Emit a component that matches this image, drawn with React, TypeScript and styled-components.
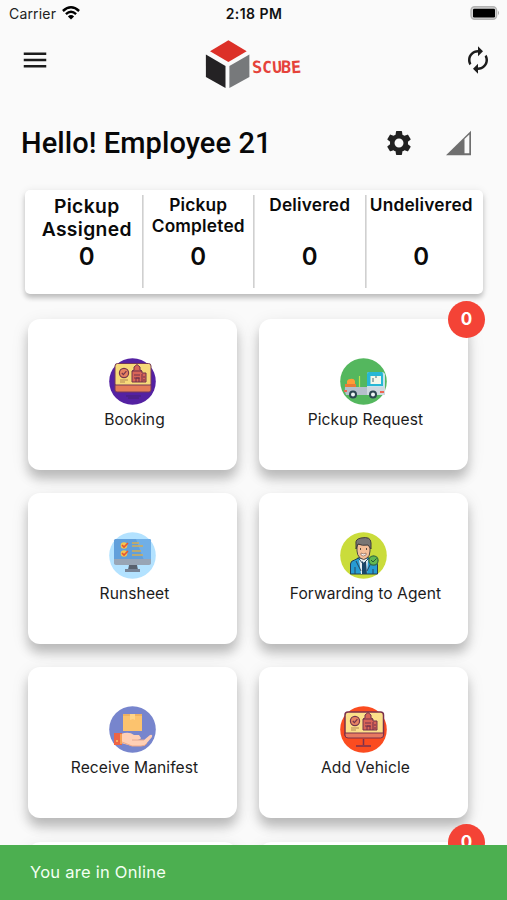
import React from 'react';
import styled, { createGlobalStyle } from 'styled-components';
import { MdMenu, MdAutorenew, MdSettings } from 'react-icons/md';

const GlobalStyle = createGlobalStyle`
  * { box-sizing: border-box; }
  body { margin: 0; background: #fafafa; color: #111; font-family: Inter, "Liberation Sans", sans-serif; }
`;

const Screen = styled.div`
  width: 507px;
  height: 900px;
  overflow: hidden;
  display: flex;
  flex-direction: column;
  background: #fafafa;
`;

const StatusBar = styled.div`
  height: 28px;
  flex: none;
  padding: 0 7px 2px 9px;
  display: grid;
  grid-template-columns: 1fr auto 1fr;
  align-items: center;
  font-size: 14px;
`;

const Carrier = styled.div`
  display: flex;
  align-items: center;
  gap: 6px;
  letter-spacing: 0.18px;
  color: #222;
`;

const Clock = styled.div`
  margin-right: 1px;
  font-weight: 600;
  font-size: 14px;
  letter-spacing: 0.45px;
  color: #111;
`;

const BatterySlot = styled.div`
  display: flex;
  justify-content: flex-end;
`;

const AppBar = styled.header`
  height: 72px;
  flex: none;
  padding: 0 14px 8px 20px;
  display: flex;
  justify-content: space-between;
  align-items: center;
  color: #1c1c1c;
`;

const Brand = styled.div`
  display: flex;
  align-items: center;
  padding: 9px 7px 0 0;
`;

const BrandName = styled.span`
  display: flex;
  font-family: "DejaVu Sans Mono", monospace;
  font-weight: 700;
  font-size: 17px;
  line-height: 20px;
  letter-spacing: -0.3px;
  margin: 4px 0 0 2px;
  color: #e5423a;
`;

const BrandLetter = styled.span<{ $tilt: number; $scale: number }>`
  transform: rotate(${p => p.$tilt}deg) scale(${p => p.$scale});
`;

const Greeting = styled.div`
  height: 90px;
  flex: none;
  padding: 0 35px 5px 21px;
  display: flex;
  align-items: center;
`;

const Title = styled.h1`
  margin: 0 auto 0 0;
  font-family: Roboto, sans-serif;
  font-size: 29px;
  font-weight: 500;
  letter-spacing: 0.08px;
  color: #080808;
  white-space: nowrap;
`;

const Actions = styled.div`
  display: flex;
  align-items: center;
  gap: 31px;
  color: #212121;
`;

const Stats = styled.section`
  flex: none;
  width: 458px;
  height: 104px;
  margin-left: 25px;
  padding: 5px 6px 6px;
  display: grid;
  grid-template-columns: repeat(4, 111.5px);
  background: #fff;
  border-radius: 5px;
  box-shadow: 0 4px 5px rgba(0, 0, 0, 0.2), 0 1px 8px rgba(0, 0, 0, 0.09);
`;

const Stat = styled.div<{ $large?: boolean }>`
  display: flex;
  flex-direction: column;
  align-items: center;
  text-align: center;
  white-space: pre-line;
  font-weight: 600;
  font-size: ${p => (p.$large ? 19.3 : 17.3)}px;
  line-height: ${p => (p.$large ? 23 : 20.6)}px;
  letter-spacing: ${p => (p.$large ? 0.35 : 0.2)}px;
  color: #0a0a0a;
  & + & { box-shadow: -1px 0 0 #d0d0d0, inset 1px 0 0 #e2e2e2; }
`;

const StatLabel = styled.div`
  height: 47px;
`;

const StatValue = styled.div`
  font-size: 24px;
  line-height: 29px;
  letter-spacing: 0;
`;

const Tiles = styled.main`
  flex: 1;
  min-height: 0;
  overflow: hidden;
  padding: 24.6px 0 0 28px;
  display: grid;
  grid-template-columns: 209px 209px;
  grid-auto-rows: 151px;
  gap: 23.4px 22px;
`;

const Tile = styled.div`
  position: relative;
  display: flex;
  flex-direction: column;
  align-items: center;
  padding-top: 39px;
  background: #fff;
  border-radius: 12px;
  box-shadow: 0 9px 11px rgba(0, 0, 0, 0.2), 0 5px 18px rgba(0, 0, 0, 0.1);
`;

const TileIcon = styled.svg`
  width: 47px;
  height: 47px;
  margin-right: 1px;
`;

const TileLabel = styled.div`
  margin-top: 5px;
  padding-left: 4px;
  font-size: 15.6px;
  line-height: 20px;
  letter-spacing: 0.08px;
  color: #1c1c1c;
  white-space: nowrap;
`;

const Badge = styled.div`
  position: absolute;
  right: -17px;
  top: -17.5px;
  width: 37px;
  height: 37px;
  border-radius: 50%;
  background: #f44336;
  color: #fff;
  font-size: 17px;
  font-weight: 700;
  line-height: 37px;
  text-align: center;
`;

const Snackbar = styled.footer`
  flex: none;
  height: 55px;
  padding-left: 30px;
  background: #4caf50;
  color: #f3fff3;
  font-size: 16.5px;
  line-height: 54px;
  letter-spacing: 0.25px;
  position: relative;
`;

const Wifi = () => (
  <svg width="18" height="14" viewBox="0 0 18 14" fill="none" stroke="#000" strokeWidth="2.4">
    <path d="M.9 5Q9-2.4 17.1 5M3.9 8.2Q9 3.5 14.1 8.2" />
    <path d="M9 13.6 5.9 10.4Q9 7.8 12.1 10.4Z" fill="#000" stroke="none" />
  </svg>
);

const Battery = () => (
  <svg width="30" height="14" viewBox="0 0 30 14">
    <rect x="1" y=".8" width="25.6" height="12.4" rx="3.6" fill="#d5d5d5" stroke="#b3b3b3" strokeWidth="1.4" />
    <rect x="3" y="2.7" width="22" height="8.8" rx="1.3" />
    <path d="M28 4.8q2 2.2 0 4.4z" fill="#aaa" />
  </svg>
);

const Cube = () => (
  <svg width="45" height="49" viewBox="0 0 45 49">
    <path d="M23.4.3 41.7 11.3 23.4 22 5 11.3Z" fill="#dc3028" />
    <path d="M.9 14.5 20.5 26v22L.9 37Z" fill="#242224" />
    <path d="M44.4 14.5 24.4 26v22L44.4 37Z" fill="#77797b" />
  </svg>
);

const Signal = () => (
  <svg width="27" height="26" viewBox="0 0 27 26">
    <path d="M1 25.3 26 .7v24.6Z" fill="#6f6f6f" />
    <path d="M19.5 9 24.3 4.5v18.8h-4.8Z" fill="#fafafa" />
  </svg>
);

const Verification = () => (
  <>
    <circle cx="15" cy="15" r="4.6" fill="#e78262" stroke="#74354c" strokeWidth="1.2" />
    <path d="m12.8 15 1.6 1.7 3-3.5" stroke="#74354c" strokeWidth="1.2" fill="none" />
    <path d="M11 22h8M11 24h5" stroke="#b38554" strokeWidth="1" />
    <path d="M23 24V13l2-1V9l3-2.5L31 9v3l2 1v2h4v9Z" fill="#d86558" stroke="#71324b" strokeWidth="1" />
    <path d="M23 13h10M25 17h6m-6 3h6M33 16v8m1-5h2m-2 3h2M27 24v-4h3v4" stroke="#71324b" strokeWidth="1" fill="none" />
  </>
);

const BookingArt = () => (
  <>
    <circle cx="23.5" cy="23.5" r="23.3" fill="#5421a2" />
    <rect x="6" y="5.5" width="36" height="23" rx="2.5" fill="#f7da79" stroke="#743858" />
    <Verification />
    <path d="M6 27h36v5q0 2-2 2H8q-2 0-2-2Z" fill="#e47c58" stroke="#743858" />
    <path d="M17 38h15M19 40h11" stroke="#442074" />
  </>
);

const TruckArt = () => (
  <>
    <circle cx="23.5" cy="23.5" r="23.3" fill="#54b75e" />
    <path d="M5 29h22v8H6q-2-4-1-8Z" fill="#b5bfcb" />
    <path d="M7 28v-5q1-2 3-2 4-1 5 2v5Z" fill="#ff9d35" />
    <path d="M5 26h11v3H5Z" fill="#e97c36" />
    <path d="M19.5 18v11" stroke="#b6e74e" strokeWidth="1.2" />
    <path d="M27 16q0-2 2-2h13q2 0 3 2v21H27Z" fill="#c7e3eb" />
    <path d="M27 28V16q0-2 2-2h13q1 0 1 3v11Z" fill="#27b7d5" />
    <path d="M30.5 18H41v8H30.5Z" fill="#f3f7ea" />
    <path d="M33 24v-4m2-1h2" stroke="#496d74" />
    <path d="M27 29h18v8H27Z" fill="#cfd8df" />
    <path d="M4 33h3m33 1h4" stroke="#ef6654" strokeWidth="2" />
    <circle cx="13" cy="36.5" r="3" fill="#edf4f5" stroke="#2b4650" strokeWidth="2" />
    <circle cx="33" cy="36.5" r="3" fill="#edf4f5" stroke="#2b4650" strokeWidth="2" />
  </>
);

const RunsheetArt = () => (
  <>
    <circle cx="23.5" cy="23.5" r="23.3" fill="#b3e2ff" />
    <rect x="5" y="7" width="37" height="25" rx="1.5" fill="#619fdb" />
    <path d="M27 7h13q2 0 2 2v22H36Z" fill="#70afe7" />
    <path d="M5 27h37v4q0 2-2 2H7q-2 0-2-2Z" fill="#98a5b5" />
    <path d="M20 33h8l1 5H19Z" fill="#58616e" />
    <path d="M16 37h15v3H16Z" fill="#778497" />
    <circle cx="15" cy="13.5" r="3.3" fill="#f4c64e" />
    <circle cx="15" cy="21.5" r="3.3" fill="#f4c64e" />
    <path d="m13 13 2 2 4-4m-6 10 2 2 4-4" stroke="#e65534" strokeWidth="1.6" fill="none" />
    <path d="M23 11h7m-7 3h11m-11 5h9m-9 4h11" stroke="#d4ad55" strokeWidth="1.4" />
  </>
);

const AgentArt = () => (
  <>
    <circle cx="23.5" cy="23.5" r="23.3" fill="#cadc3b" />
    <path d="M10.5 42V32q0-3 4-4l6-3h6l7 3q4 1 4 5v9Z" fill="#279bd2" stroke="#263f54" />
    <path d="M19 27h9l-1 15h-6Z" fill="#e8f0f3" />
    <path d="m22 29 2 2 2-2 1 13h-5Z" fill="#1a4668" />
    <path d="M18 25.5 23 32l6-6m-13 3 5 10m11-10-5 10M15 35v7m18-5v5" stroke="#25465f" fill="none" />
    <path d="M17 12h13v7q0 5-3 7-3 3-7 0-3-3-3-7Z" fill="#f4be98" stroke="#4b4643" />
    <path d="M16 17v-5q-1-5 5-6 10-2 10 5v6l-3-4q-6 1-10-1Z" fill="#777574" stroke="#403c3b" />
    <path d="M20 17h1m5 0h1" stroke="#272727" strokeWidth="1.4" />
    <path d="M21 21q3 2 5 0v2q-3 2-5 0Z" fill="#fff" stroke="#735346" strokeWidth=".6" />
    <circle cx="33.5" cy="28.5" r="4.6" fill="#62b851" stroke="#356b41" strokeWidth="1.2" />
    <path d="m31 28 2 2 3.5-3.5" stroke="#245c36" fill="none" />
  </>
);

const ManifestArt = () => (
  <>
    <circle cx="23.5" cy="23.5" r="23.3" fill="#7785cd" />
    <path d="M14 8h19v17H14Z" fill="#fcc36e" />
    <path d="M14 8h19v2H14Z" fill="#efb261" />
    <path d="M21 8h5v6l-2-1-3 1Z" fill="#ffd487" />
    <path d="M12 28q8-3 13 1h5l2 3q-1 2-5 2h8l6-5q3-1 2 2l-6 7q-2 2-7 2H23l-11-3Z" fill="#ffcfb5" />
    <path d="M23 34h12" stroke="#e6a88e" />
    <path d="m13 36 10 4h9q5 0 6-3" stroke="#f0a986" fill="none" />
    <path d="M5 27h8v12H5Z" fill="#ee6445" />
    <path d="M11 28h2v10h-2Z" fill="#f7a052" />
    <circle cx="8" cy="35" r="1" fill="#ffc36c" />
  </>
);

const VehicleArt = () => (
  <>
    <circle cx="23.5" cy="23.5" r="23.3" fill="#fb4c20" />
    <rect x="5" y="6" width="38.5" height="25" rx="3" fill="#fce08a" stroke="#7b304b" strokeWidth="1.5" />
    <Verification />
    <path d="M5 27h38.5v2q0 3-3 3H8q-3 0-3-3Z" fill="#e77a61" stroke="#7b304b" />
    <path d="M23.5 33v6M16 40h15" stroke="#79304d" strokeWidth="1.5" />
  </>
);

const brandLetters = [
  { char: 'S', tilt: -4, scale: 0.98 },
  { char: 'C', tilt: 2, scale: 0.94 },
  { char: 'U', tilt: -4, scale: 0.94 },
  { char: 'B', tilt: 2, scale: 1 },
  { char: 'E', tilt: -4, scale: 0.98 },
];

const stats = [
  { label: 'Pickup\nAssigned', large: true },
  { label: 'Pickup\nCompleted' },
  { label: 'Delivered' },
  { label: 'Undelivered' },
];

const tiles = [
  { label: 'Booking', Art: BookingArt },
  { label: 'Pickup Request', Art: TruckArt, badge: 0 },
  { label: 'Runsheet', Art: RunsheetArt },
  { label: 'Forwarding to Agent', Art: AgentArt },
  { label: 'Receive Manifest', Art: ManifestArt },
  { label: 'Add Vehicle', Art: VehicleArt },
];

export default function App() {
  return (
    <Screen>
      <GlobalStyle />
      <StatusBar>
        <Carrier>Carrier<Wifi /></Carrier>
        <Clock>2:18 PM</Clock>
        <BatterySlot><Battery /></BatterySlot>
      </StatusBar>
      <AppBar>
        <MdMenu size={30} />
        <Brand>
          <Cube />
          <BrandName>
            {brandLetters.map(l => (
              <BrandLetter key={l.char} $tilt={l.tilt} $scale={l.scale}>{l.char}</BrandLetter>
            ))}
          </BrandName>
        </Brand>
        <MdAutorenew size={30} />
      </AppBar>
      <Greeting>
        <Title>Hello! Employee 21</Title>
        <Actions><MdSettings size={30} /><Signal /></Actions>
      </Greeting>
      <Stats>
        {stats.map(s => (
          <Stat key={s.label} $large={s.large}>
            <StatLabel>{s.label}</StatLabel>
            <StatValue>0</StatValue>
          </Stat>
        ))}
      </Stats>
      <Tiles>
        {tiles.map(({ label, Art, badge }) => (
          <Tile key={label}>
            <TileIcon viewBox="0 0 47 47"><Art /></TileIcon>
            <TileLabel>{label}</TileLabel>
            {badge !== undefined && <Badge>{badge}</Badge>}
          </Tile>
        ))}
        <Tile />
        <Tile><Badge>0</Badge></Tile>
      </Tiles>
      <Snackbar>You are in Online</Snackbar>
    </Screen>
  );
}
